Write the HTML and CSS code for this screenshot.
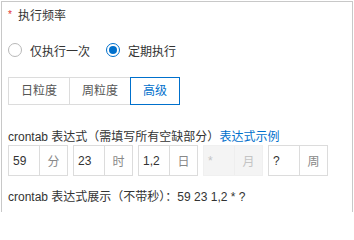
FILE: index.html
```html
<!DOCTYPE html>
<html lang="zh">
<head>
<meta charset="utf-8">
<link rel="stylesheet" href="styles.css">
</head>
<body>
<div class="panel">
  <div class="field-label"><span class="req">*</span>执行频率</div>
  <div class="radios">
    <label class="radio"><span class="dot"></span>仅执行一次</label>
    <label class="radio checked"><span class="dot"></span>定期执行</label>
  </div>
  <div class="tabs">
    <div class="tab">日粒度</div>
    <div class="tab">周粒度</div>
    <div class="tab active">高级</div>
  </div>
  <div class="cron-label">crontab 表达式（需填写所有空缺部分）<a class="link">表达式示例</a></div>
  <div class="groups">
    <div class="group"><span class="val">59</span><span class="addon">分</span></div>
    <div class="group"><span class="val">23</span><span class="addon">时</span></div>
    <div class="group"><span class="val">1,2</span><span class="addon">日</span></div>
    <div class="group disabled"><span class="val">*</span><span class="addon">月</span></div>
    <div class="group"><span class="val">?</span><span class="addon">周</span></div>
  </div>
  <div class="preview">crontab 表达式展示（不带秒）：59 23 1,2 * ?</div>
</div>
</body>
</html>
```

FILE: styles.css
```css
html, body {
  margin: 0;
  padding: 0;
  background: #fff;
  overflow: hidden;
}
body {
  font-family: "Liberation Sans", "Noto Sans CJK SC", sans-serif;
  font-size: 12px;
  color: #333;
}
.panel {
  margin: 1px 1px 0 1px;
  border: 1px solid #c8c8c8;
  border-bottom: none;
  height: 211px;
  padding: 5px 0 0 6px;
  box-sizing: border-box;
}
.field-label {
  line-height: 18px;
  height: 18px;
  display: flex;
  align-items: center;
}
.req {
  color: #e03030;
  font-size: 10px;
  width: 9px;
  margin-right: 1px;
  position: relative;
  top: -1px;
}
.radios {
  margin-top: 16px;
  display: flex;
  align-items: center;
  height: 18px;
}
.radio {
  display: flex;
  align-items: center;
  margin-right: 16px;
}
.dot {
  width: 14px;
  height: 14px;
  box-sizing: border-box;
  border: 1px solid #b8b8b8;
  border-radius: 50%;
  margin-right: 8px;
  display: flex;
  align-items: center;
  justify-content: center;
}
.radio.checked .dot {
  border-color: #0070cc;
}
.radio.checked .dot::after {
  content: "";
  width: 8px;
  height: 8px;
  border-radius: 50%;
  background: #0070cc;
}
.tabs {
  margin-top: 18px;
  display: flex;
}
.tab {
  height: 28px;
  box-sizing: border-box;
  border: 1px solid #dcdcdc;
  padding: 0 12px;
  line-height: 26px;
  margin-left: -1px;
  color: #555;
  position: relative;
}
.tab:first-child {
  margin-left: 0;
}
.tab.active {
  border-color: #0070cc;
  color: #0070cc;
  z-index: 1;
}
.cron-label {
  margin-top: 24px;
  line-height: 16px;
  height: 16px;
}
.link {
  color: #0070cc;
}
.groups {
  display: flex;
  gap: 5px;
}
.group {
  width: 60px;
  height: 31px;
  box-sizing: border-box;
  border: 1px solid #dcdcdc;
  display: flex;
  align-items: stretch;
  font-size: 12px;
}
.val {
  width: 30px;
  padding-left: 4px;
  box-sizing: border-box;
  display: flex;
  align-items: center;
  color: #333;
}
.addon {
  flex: 1;
  border-left: 1px solid #dcdcdc;
  display: flex;
  align-items: center;
  justify-content: center;
  color: #888;
}
.group.disabled {
  background: #f4f4f4;
  border-color: #f0f0f0;
}
.group.disabled .val,
.group.disabled .addon {
  color: #c4c4c4;
}
.group.disabled .addon {
  border-left-color: #eeeeee;
}
.preview {
  margin-top: 13px;
  line-height: 16px;
}
```
